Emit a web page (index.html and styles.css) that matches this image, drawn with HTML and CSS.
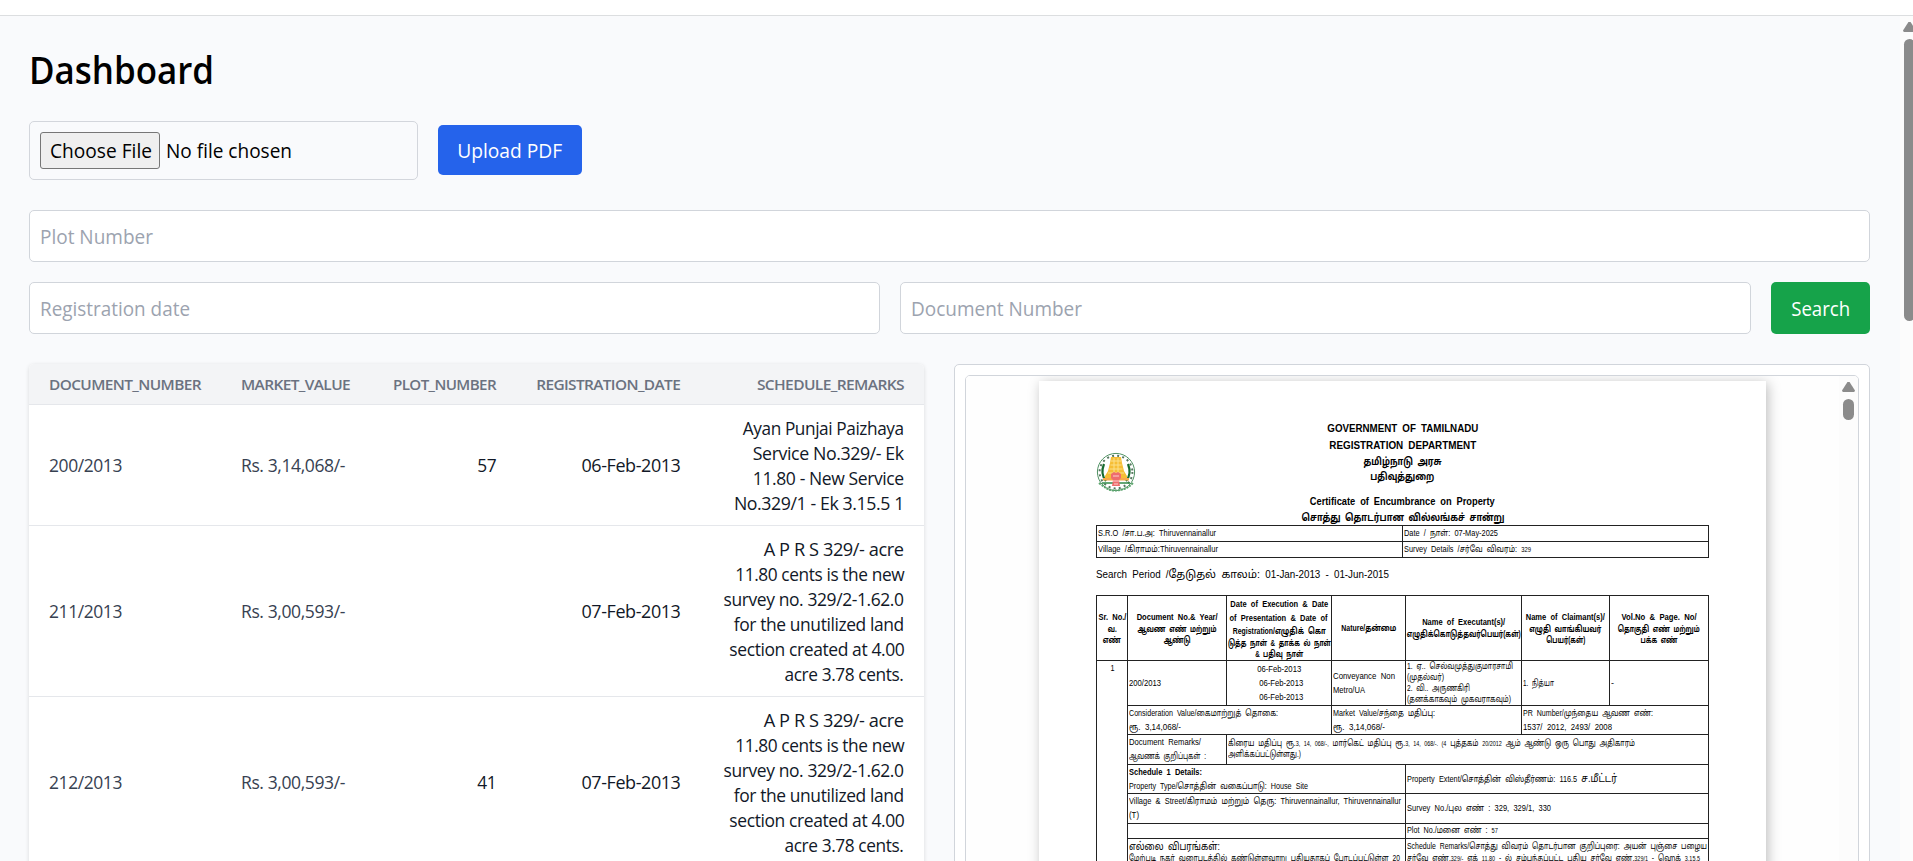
FILE: index.html
```html
<!DOCTYPE html>
<html lang="en">
<head>
<meta charset="utf-8">
<title>Dashboard</title>
<link rel="stylesheet" href="styles.css">
</head>
<body>
<div class="topbar"></div>
<div class="viewport">
  <main class="main">
    <h1 class="title"><span data-w="185">Dashboard</span></h1>
    <div class="upload">
      <div class="file"><span class="file-btn"><span data-w="102">Choose File</span></span><span class="file-name" data-w="126">No file chosen</span></div>
      <button class="btn btn-blue"><span data-w="105">Upload PDF</span></button>
    </div>
    <div class="search">
      <div class="input wide"><span data-w="113">Plot Number</span></div>
      <div class="input"><span data-w="150">Registration date</span></div>
      <div class="input"><span data-w="171">Document Number</span></div>
      <button class="btn btn-green"><span data-w="59">Search</span></button>
    </div>
    <div class="panels">
      <section class="card">
        <table class="records">
          <colgroup><col class="c-doc"><col class="c-val"><col class="c-plot"><col class="c-date"><col class="c-rem"></colgroup>
          <thead><tr>
            <th><span data-w="152">DOCUMENT_NUMBER</span></th>
            <th><span data-w="109">MARKET_VALUE</span></th>
            <th class="r"><span data-w="103">PLOT_NUMBER</span></th>
            <th class="r"><span data-w="144">REGISTRATION_DATE</span></th>
            <th class="r"><span data-w="147">SCHEDULE_REMARKS</span></th>
          </tr></thead>
          <tbody>
            <tr>
              <td><span data-w="73">200/2013</span></td><td><span data-w="104">Rs. 3,14,068/-</span></td><td class="r"><span data-w="19">57</span></td><td class="r"><span data-w="99">06-Feb-2013</span></td>
              <td class="r"><span data-w="161">Ayan Punjai Paizhaya</span><br><span data-w="151">Service No.329/- Ek</span><br><span data-w="151">11.80 - New Service</span><br><span data-w="170">No.329/1 - Ek 3.15.5 1</span></td>
            </tr>
            <tr>
              <td><span data-w="73">211/2013</span></td><td><span data-w="104">Rs. 3,00,593/-</span></td><td></td><td class="r"><span data-w="99">07-Feb-2013</span></td>
              <td class="r"><span data-w="140">A P R S 329/- acre</span><br><span data-w="169">11.80 cents is the new</span><br><span data-w="180">survey no. 329/2-1.62.0</span><br><span data-w="170">for the unutilized land</span><br><span data-w="175">section created at 4.00</span><br><span data-w="119">acre 3.78 cents.</span></td>
            </tr>
            <tr>
              <td><span data-w="73">212/2013</span></td><td><span data-w="104">Rs. 3,00,593/-</span></td><td class="r"><span data-w="19">41</span></td><td class="r"><span data-w="99">07-Feb-2013</span></td>
              <td class="r"><span data-w="140">A P R S 329/- acre</span><br><span data-w="169">11.80 cents is the new</span><br><span data-w="180">survey no. 329/2-1.62.0</span><br><span data-w="170">for the unutilized land</span><br><span data-w="175">section created at 4.00</span><br><span data-w="119">acre 3.78 cents.</span></td>
            </tr>
          </tbody>
        </table>
      </section>
      <section class="preview">
        <div class="frame">
          <div class="canvas">
            <article class="page">
              <header class="head">
                <svg class="emblem" viewBox="0 0 40 40">
                  <circle cx="20" cy="20" r="18.6" fill="#fff" stroke="#4f9162" stroke-width="1"/>
                  <circle cx="20" cy="20" r="16.4" fill="none" stroke="#56775f" stroke-width="2" stroke-dasharray="2 3.200"/>
                  <path d="M8 12q-4 10 2 17M32 12q4 10-2 17" fill="none" stroke="#176b2f" stroke-width="2.200"/>
                  <path d="M15 5h10l1 6 2 8 3 5v4H9v-4l3-5 2-8z" fill="#f6be35"/>
                  <path d="M15 9h10M14.500 13h11M13.500 17h13M12 21h16M18 6v14M22 6v14" stroke="#fbe08a" stroke-width="1"/>
                  <path d="M7 26h26v2.500H7z" fill="#f8a94a"/>
                  <path d="M6 31h28" stroke="#2f8a47" stroke-width="1.600"/>
                  <path d="M15 22l3-2 2 1 2-1 3 2v4l-2 2 1 6h-8l1-6-2-2z" fill="#ee6d6d"/>
                  <path d="M17 24h6M17 29h6M18 32h4" stroke="#fbd0d0" stroke-width="1"/>
                  <path d="M3 31q5 4 9 6t8 1.500 8-1.500 9-6" fill="none" stroke="#5ca56e" stroke-width="2" stroke-dasharray="2 1"/>
                </svg>
                <div class="titles">
                  <b class="l17" data-w="151">GOVERNMENT OF TAMILNADU</b>
                  <b class="l17" data-w="147">REGISTRATION DEPARTMENT</b>
                  <b class="l16 ta" data-w="78">தமிழ்நாடு அரசு</b>
                  <b class="l14 ta" data-w="64">பதிவுத்துறை</b>
                  <b class="l17 cert" data-w="185">Certificate of Encumbrance on Property</b>
                  <b class="l16 ta" data-w="203">சொத்து தொடர்பான வில்லங்கச் சான்று</b>
                </div>
              </header>
              <div class="info">
                <div><span data-w="118">S.R.O /சா.ப.அ: Thiruvennainallur</span></div>
                <div><span data-w="94">Date / நாள்: 07-May-2025</span></div>
                <div><span data-w="120">Village /கிராமம்:Thiruvennainallur</span></div>
                <div><span data-w="127">Survey Details /சர்வே விவரம்: <small>329</small></span></div>
              </div>
              <p class="period"><span data-w="293">Search Period /<span class="big">தேடுதல் காலம்:</span> 01-Jan-2013 - 01-Jun-2015</span></p>
              <div class="deed">
                <div class="cell h sr"><b class="l13" data-w="28">Sr. No./</b><b class="l11" data-w="9">வ.</b><b class="l11" data-w="18">எண்</b></div>
                <div class="cell h"><b class="l13" data-w="81">Document No.&amp; Year/</b><b class="l11" data-w="79">ஆவண எண் மற்றும்</b><b class="l11" data-w="27">ஆண்டு</b></div>
                <div class="cell h"><b class="l14" data-w="98">Date of Execution &amp; Date</b><b class="l14" data-w="98">of Presentation &amp; Date of</b><b class="l13" data-w="93">Registration/எழுதிக் கொ</b><b class="l11" data-w="103">டுத்த நாள் &amp; தாக்க ல் நாள்</b><b class="l10" data-w="48">&amp; பதிவு நாள்</b></div>
                <div class="cell h"><b class="l14" data-w="55">Nature/தன்மை</b></div>
                <div class="cell h"><b class="l13" data-w="83">Name of Executant(s)/</b><b class="l11" data-w="114">எழுதிக்கொடுத்தவர்பெயர்(கள்)</b></div>
                <div class="cell h"><b class="l13" data-w="79">Name of Claimant(s)/</b><b class="l11" data-w="72">எழுதி வாங்கியவர்</b><b class="l11" data-w="39">பெயர்(கள்)</b></div>
                <div class="cell h"><b class="l13" data-w="75">Vol.No &amp; Page. No/</b><b class="l11" data-w="82">தொகுதி எண் மற்றும்</b><b class="l11" data-w="37">பக்க எண்</b></div>

                <div class="cell h num"><span class="l14" data-w="4">1</span></div>
                <div class="cell"><span data-w="32">200/2013</span></div>
                <div class="cell h"><span data-w="44">06-Feb-2013</span><span class="dent" data-w="44">06-Feb-2013</span><span class="dent" data-w="44">06-Feb-2013</span></div>
                <div class="cell"><span data-w="62">Conveyance Non</span><span data-w="32">Metro/UA</span></div>
                <div class="cell"><span class="l11" data-w="106">1. ஏ.. செல்வமுத்துகுமாரசாமி</span><span class="l11" data-w="37">(முதல்வர்)</span><span class="l11" data-w="63">2. வி.. அருணகிரி</span><span class="l11" data-w="104">(தனக்காகவும் முகவராகவும்)</span></div>
                <div class="cell"><span data-w="31">1. நித்யா</span></div>
                <div class="cell"><span data-w="3">-</span></div>

                <div class="cell s2"><span data-w="149">Consideration Value/கைமாற்றுத் தொகை:</span><span data-w="52">ரூ. 3,14,068/-</span></div>
                <div class="cell s2"><span data-w="102">Market Value/சந்தை மதிப்பு:</span><span data-w="52">ரூ. 3,14,068/-</span></div>
                <div class="cell s2"><span data-w="130">PR Number/முந்தைய ஆவண எண்:</span><span data-w="89">1537/ 2012, 2493/ 2008</span></div>

                <div class="cell"><span data-w="72">Document Remarks/</span><span data-w="77">ஆவணக் குறிப்புகள் :</span></div>
                <div class="cell s5 note"><span class="l11" data-w="407">கிரைய மதிப்பு ரூ.<small>3, 14, 068/-,</small> மார்கெட் மதிப்பு ரூ.<small>3, 14, 068/-. (4</small> புத்தகம் <small>20/2012</small> ஆம் ஆண்டு ஒரு பொது அதிகாரம்</span><span class="l11" data-w="73">அளிக்கப்பட்டுள்ளது.)</span></div>

                <div class="cell s3"><b data-w="73">Schedule 1 Details:</b><span data-w="179">Property Type/சொத்தின் வகைப்பாடு: House Site</span></div>
                <div class="cell s3"><span data-w="210">Property Extent/சொத்தின் விஸ்தீர்ணம்: 116.5 <span class="big">ச.மீட்டர்</span></span></div>

                <div class="cell s3"><span data-w="272">Village &amp; Street/கிராமம் மற்றும் தெரு: Thiruvennainallur, Thiruvennainallur</span><span data-w="10">(T)</span></div>
                <div class="cell s3"><span data-w="144">Survey No./புல எண் : 329, 329/1, 330</span></div>

                <div class="cell s3"></div>
                <div class="cell s3"><span data-w="91">Plot No./மனை எண் : <small>57</small></span></div>

                <div class="cell s3 top"><span class="l12 big" data-w="91">எல்லை விபரங்கள்:</span><span class="l12" data-w="271">மேற்படி நகர் வரைபடத்தில் கண்டுள்ளவாறு புதியதாகப் போடப்பட்டுள்ள 20</span></div>
                <div class="cell s3 top"><span class="l12" data-w="300">Schedule Remarks/சொத்து விவரம் தொடர்பான குறிப்புரை: அயன் புஞ்சை பழைய</span><span class="l12" data-w="293">சர்வே எண்.<small>329/-</small> எக் <small>11.80</small> - ல் சம்பந்தப்பட்ட புதிய சர்வே எண்.<small>329/1</small> - ஹெக் <small>3.15.5</small></span></div>
              </div>
            </article>
          </div>
          <div class="scroll inner"><i class="arrow"></i><i class="thumb"></i></div>
        </div>
      </section>
    </div>
  </main>
  <div class="scroll outer"><i class="arrow"></i><i class="thumb"></i></div>
</div>
<script src="textfit.js"></script>
</body>
</html>
```
FILE: textfit.js
```js
// Scales each text run horizontally to its measured advance width.
document.querySelectorAll('[data-w]').forEach(function (el) {
  var natural = el.getBoundingClientRect().width;
  if (natural > 0) el.style.transform = 'scaleX(' + (el.dataset.w / natural).toFixed(4) + ')';
});
```
FILE: styles.css
```css
* { box-sizing: border-box; }
html, body { margin: 0; height: 861px; overflow: hidden; }
body { display: flex; flex-direction: column; background: #fff; color: #000; font: 20px/30px "Open Sans", "Noto Sans", sans-serif; }
[data-w] { display: inline-block; white-space: nowrap; transform-origin: 0 50%; }

.topbar { flex: none; height: 16px; border-bottom: 1px solid #dcdee0; }
.viewport { flex: 1; min-height: 0; display: flex; overflow: hidden; background: #f9fafc; }
.main { flex: none; width: 1900px; padding: 31px 30px 0 29px; }

.title { margin: 0 0 29px; font-size: 37.5px; line-height: 45px; font-weight: 600; }
.upload { display: flex; align-items: center; gap: 20px; margin-bottom: 30px; }
.file { display: flex; align-items: center; gap: 6px; width: 389px; height: 59px; padding: 0 10px; border: 1px solid #d3d6dc; border-radius: 5px; }
.file-btn { width: 120px; height: 37px; padding: 3px 9px; border: 1px solid #767676; border-radius: 3px; background: #efefef; }
.btn { border: 0; padding: 2px 0 0; border-radius: 5px; font: inherit; color: #fff; }
.btn [data-w] { transform-origin: 50% 50%; }
.btn-blue { width: 144px; height: 50px; margin-bottom: 1px; background: #2563eb; }
.btn-green { width: 99px; height: 52px; background: #16a34a; }
.search { display: grid; grid-template-columns: 1fr 1fr 99px; gap: 20px; margin-bottom: 30px; }
.input { height: 52px; padding: 11px 10px 0; border: 1px solid #d1d5db; border-radius: 5px; background: #fff; color: #9ca3af; }
.input.wide { grid-column: 1 / -1; }

.panels { display: flex; gap: 30px; align-items: flex-start; }
.card { width: 895px; border-radius: 5px; background: #fff; box-shadow: 0 1px 4px rgba(0, 0, 0, .13); overflow: hidden; }
.records { width: 895px; table-layout: fixed; border-collapse: collapse; font-size: 17.5px; line-height: 25px; color: #111827; }
.c-doc { width: 192px; } .c-val { width: 152px; } .c-plot { width: 143px; } .c-date { width: 184px; } .c-rem { width: 224px; }
.records th { height: 40px; padding: 0 20px; background: #f3f4f6; color: #6b7280; font-size: 15px; line-height: 20px; font-weight: 600; letter-spacing: -.6px; text-align: left; border-bottom: 1px solid #e5e7eb; }
.records td { padding: 11px 20px 9px; border-bottom: 1px solid #e5e7eb; vertical-align: middle; white-space: nowrap; letter-spacing: -.4px; color: #374151; }
.records .r { text-align: right; }
.records td.r { color: #111827; }
.r [data-w] { transform-origin: 100% 50%; }

.preview { width: 916px; height: 1000px; padding: 10px; border: 1px solid #d1d5db; border-radius: 5px; background: #fff; }
.frame { display: flex; height: 980px; border: 1px solid #d1d5db; border-radius: 5px; overflow: hidden; }
.canvas { flex: 1; padding: 5px 0 0 73px; background: #fefefe; overflow: hidden; }
.page { width: 727px; height: 980px; padding: 34px 57px 0 57px; background: #fff; box-shadow: 2px 2px 12px rgba(0, 0, 0, .26); font: 8.8px/14px "Liberation Sans", "Noto Sans Tamil", "Noto Sans", sans-serif; word-spacing: 2.5px; }

.scroll { flex: none; background: #fcfcfc; display: flex; flex-direction: column; align-items: center; }
.scroll i { display: block; flex: none; }
.arrow { width: 13px; height: 10px; background: #8b8b8b; clip-path: polygon(42% 0, 58% 0, 100% 84%, 94% 100%, 6% 100%, 0 84%); }
.thumb { width: 11px; margin-top: 7px; border-radius: 6px; background: #8b8b8b; }
.inner { width: 19px; padding-top: 6px; }
.inner .thumb { height: 21px; }
.outer { width: 19px; padding-top: 6px; }
.outer .thumb { height: 282px; }

.head { display: grid; grid-template-columns: 40px 1fr 40px; height: 110px; }
.emblem { width: 40px; height: 40px; margin-top: 37px; }
.titles { display: flex; flex-direction: column; align-items: center; padding-top: 5px; font-size: 10.2px; }
.titles [data-w], .h [data-w] { transform-origin: 50% 50%; }
.titles .cert { margin-top: 9px; }
.titles .ta { font-size: 10.4px; }
.l17 { line-height: 17px; } .l16 { line-height: 16px; } .l14 { line-height: 14px; } .l13 { line-height: 13px; }
.l12 { line-height: 12px; } .l11 { line-height: 11px; } .l10 { line-height: 10px; }
b { font-weight: 700; }
small { font-size: 7px; }
.big { font-size: 11px; }

.info { display: grid; grid-template-columns: 306px 306px; grid-auto-rows: 16px; width: 613px; border: 1px solid #222; border-width: 1px 0 0 1px; }
.info div { padding: 0 1px; border: 1px solid #222; border-width: 0 1px 1px 0; line-height: 15px; }
.period { margin: 8px 0 13px; font-size: 10px; line-height: 16px; height: 16px; }
.deed { display: grid; grid-template-columns: 31px 99px 105px 74px 116px 88px 99px; grid-template-rows: 65px 44.5px 29.5px 29.5px 29.5px 29.5px 15.5px 60px; width: 613px; border: 1px solid #222; border-width: 1px 0 0 1px; }
.cell { display: flex; flex-direction: column; justify-content: center; align-items: flex-start; padding: 0 1px; min-width: 0; border: 1px solid #222; border-width: 0 1px 1px 0; }
.cell.h { align-items: center; }
.cell.num { grid-row: 2 / span 7; grid-column: 1; justify-content: flex-start; }
.s2 { grid-column: span 2; }
.s3 { grid-column: span 3; }
.s5 { grid-column: span 5; }
.cell.note { justify-content: flex-start; padding-top: 3px; }
.cell.top { justify-content: flex-start; padding-top: 1px; }
.dent { margin-left: 5px; }
```
